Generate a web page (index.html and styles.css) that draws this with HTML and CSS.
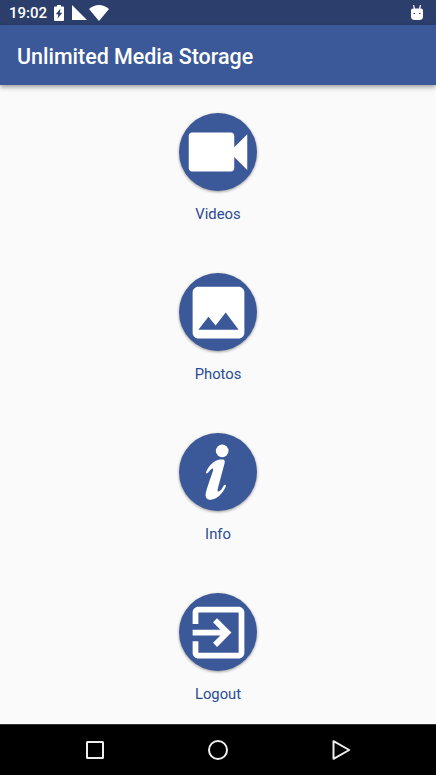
FILE: index.html
```html
<!DOCTYPE html>
<html lang="en">
<head>
    <meta charset="UTF-8">
    <meta name="viewport" content="width=device-width, initial-scale=1.0">
    <title>Unlimited Media Storage</title>
    <link rel="stylesheet" href="styles.css">
</head>
<body>

    <div class="status-bar">
        <span class="clock">19:02</span>
        <svg class="battery" width="10" height="16" viewBox="0 0 10 16">
            <path fill="#fff" d="M3 0h4v1.500h2q1 0 1 1V15q0 1-1 1H1q-1 0-1-1V2.500q0-1 1-1h2z"/>
            <path fill="#2c3f6c" d="M6.500 3.500L1.800 9.200h2.500L3.600 13.500 8.300 7.800H5.800z"/>
        </svg>
        <svg class="signal" width="15" height="15" viewBox="0 0 15 15">
            <path fill="#fff" d="M0 0v15h15z"/>
        </svg>
        <svg class="wifi" width="20" height="16" viewBox="0 0 20 16">
            <path fill="#fff" d="M0 4Q10-4 20 4L10 16z"/>
        </svg>
        <svg class="android" width="12" height="15" viewBox="0 0 12 15">
            <path fill="none" stroke="#fff" stroke-width="1.200" d="M2.500 0l1 4M9.500 0l-1 4"/>
            <path fill="#fff" d="M2 3.500h8q2 0 2 2v6q0 3.500-4 3.500H4q-4 0-4-3.500v-6q0-2 2-2z"/>
            <path fill="#2c3f6c" d="M2.500 8h1.500v1H2.500zM8 8h1.500v1H8z"/>
        </svg>
    </div>

    <header class="toolbar">
        <h1>Unlimited Media Storage</h1>
    </header>

    <main class="menu">
        <a class="item">
            <span class="circle">
                <svg width="78" height="78" viewBox="0 0 24 24">
                    <path d="M17 10.500V7c0-.55-.45-1-1-1H4c-.55 0-1 .45-1 1v10c0 .55.45 1 1 1h12c.55 0 1-.45 1-1v-3.500l4 4v-11l-4 4z"/>
                </svg>
            </span>
            <span class="label">Videos</span>
        </a>
        <a class="item">
            <span class="circle">
                <svg width="69" height="69" viewBox="0 0 24 24">
                    <path d="M21 19V5c0-1.100-.9-2-2-2H5c-1.100 0-2 .9-2 2v14c0 1.100.9 2 2 2h14c1.100 0 2-.9 2-2zM8.500 13.500l2.500 3.010L14.500 12l4.500 6H5l3.500-4.500z"/>
                </svg>
            </span>
            <span class="label">Photos</span>
        </a>
        <a class="item">
            <span class="circle">
                <svg width="78" height="78" viewBox="0 0 78 78">
                    <circle cx="43.200" cy="17.900" r="6.300"/>
                    <path d="M26.900 39.500C29 34 33.500 28.500 39 27C41.500 26.300 44 26.400 45 26.800C45.900 27.500 45.900 29 45.500 30.500L38.800 55.500C38 59 39.200 59.300 41.200 57.600C43.500 56 44 52.500 45.800 51.700C47 51.400 47.200 52.700 46.700 53.800C43.500 61 38 66.200 31.800 66.800C28 67 26 64.500 26.700 60.500C28 54.500 32 44 34 37.800C34.600 35.400 33.800 35 32.200 36.200C30 37.900 29.500 39.700 28 40.400C27.300 40.600 26.800 40.100 26.900 39.500z"/>
                </svg>
            </span>
            <span class="label">Info</span>
        </a>
        <a class="item">
            <span class="circle">
                <svg width="69" height="69" viewBox="0 0 24 24">
                    <path d="M10.090 15.590L11.500 17l5-5-5-5-1.410 1.410L12.670 11H3v2h9.670l-2.580 2.590zM19 3H5c-1.110 0-2 .9-2 2v4h2V5h14v14H5v-4H3v4c0 1.100.89 2 2 2h14c1.100 0 2-.9 2-2V5c0-1.100-.9-2-2-2z"/>
                </svg>
            </span>
            <span class="label">Logout</span>
        </a>
    </main>

    <nav class="nav-bar">
        <svg width="20" height="20" viewBox="0 0 20 20">
            <rect x="2" y="2" width="16" height="16" rx="0.500"/>
        </svg>
        <svg width="20" height="20" viewBox="0 0 20 20">
            <circle cx="10" cy="10" r="9"/>
        </svg>
        <svg width="20" height="20" viewBox="0 0 20 20">
            <path d="M2.500 1.200v17.600L18.200 10z"/>
        </svg>
    </nav>

</body>
</html>
```
FILE: styles.css
```css
* {
    box-sizing: border-box;
}

body {
    margin: 0;
    height: 100vh;
    display: flex;
    flex-direction: column;
    overflow: hidden;
    background-color: #fafafa;
    font-family: Roboto, sans-serif;
}

.status-bar {
    flex-shrink: 0;
    display: flex;
    align-items: center;
    height: 25px;
    padding: 0 13px 0 9px;
    background-color: #2c3f6c;
    color: #fff;
}

.clock {
    width: 45px;
    font-size: 15px;
    font-weight: 500;
}

.signal {
    margin-left: 8px;
}

.wifi {
    margin-left: 2px;
}

.android {
    margin-left: auto;
}

.toolbar {
    flex-shrink: 0;
    display: flex;
    align-items: center;
    height: 60px;
    padding: 2px 17px 0;
    background-color: #3b5998;
    box-shadow: 0 2px 5px rgba(0, 0, 0, 0.4);
}

.toolbar h1 {
    margin: 0;
    font-size: 21.45px;
    font-weight: 500;
    color: #fff;
}

.menu {
    flex: 1;
    min-height: 0;
    display: flex;
    flex-direction: column;
    align-items: center;
    padding-top: 28px;
}

.item {
    display: flex;
    flex-direction: column;
    align-items: center;
    height: 160px;
    flex-shrink: 0;
}

.circle {
    display: flex;
    justify-content: center;
    align-items: center;
    width: 78px;
    height: 78px;
    border-radius: 50%;
    background-color: #3b5998;
    box-shadow: 0 1px 3px rgba(0, 0, 0, 0.4);
}

.circle svg {
    fill: #fff;
}

.label {
    margin-top: 13px;
    font-size: 14.8px;
    line-height: 20px;
    color: #294b94;
}

.nav-bar {
    flex-shrink: 0;
    display: flex;
    justify-content: space-between;
    align-items: center;
    height: 51px;
    padding: 0 85px;
    background-color: #000;
    border-top: 1px solid #333;
}

.nav-bar svg {
    fill: none;
    stroke: #eee;
    stroke-width: 2;
    stroke-linejoin: round;
}
```
